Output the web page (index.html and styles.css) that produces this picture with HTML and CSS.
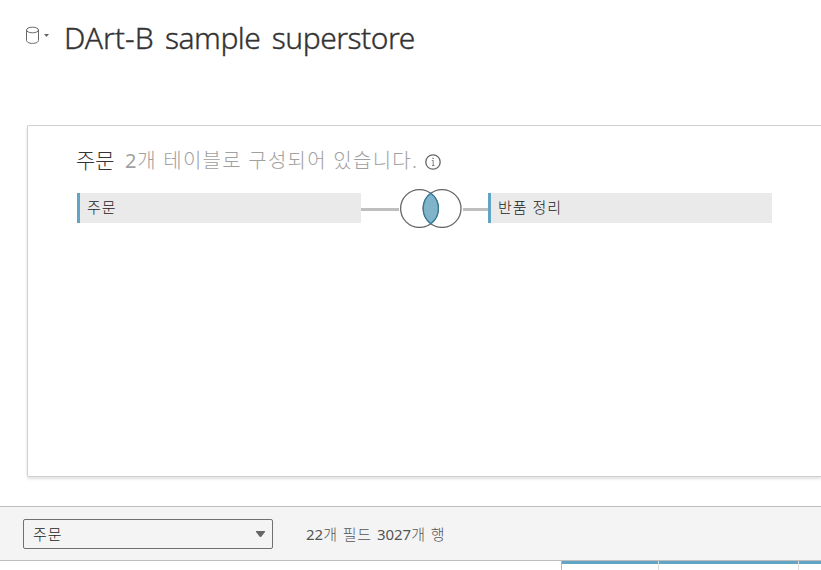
FILE: index.html
```html
<!DOCTYPE html>
<html lang="ko">
<head>
<meta charset="utf-8">
<title>DArt-B sample superstore</title>
<link rel="stylesheet" href="styles.css">
</head>
<body>
<header class="header">
  <svg class="source-icon" width="24" height="20" viewBox="0 0 24 20" fill="none" stroke="#666">
    <ellipse cx="7.5" cy="4" rx="6" ry="2.8"/>
    <path d="M1.5 4v10.2c0 1.800 2.400 3.200 6 3.200s6-1.400 6-3.200V4"/>
    <path d="M19 8h5l-2.500 3z" fill="#666" stroke="none"/>
  </svg>
  <h1 class="title"><span class="prefix">DArt-B</span> sample superstore</h1>
</header>
<main class="canvas">
  <div class="caption">
    <span class="table-name">주문</span>
    <span class="description"><span class="count">2</span>개 테이블로 구성되어 있습니다.</span>
    <svg class="info" width="16" height="16" viewBox="0 0 16 16" fill="none" stroke="#666">
      <circle cx="8" cy="8" r="7.200" stroke-width="1.300"/>
      <path d="M6.800 6.500h1.400v5M7 11.500h2.400" stroke-width=".8"/>
      <path d="M7.400 4.400h1.300" stroke-width="1.200"/>
    </svg>
  </div>
  <div class="join">
    <div class="table">주문</div>
    <div class="line left"></div>
    <svg class="venn" width="64" height="40" viewBox="0 0 64 40" fill="none" stroke="#666" stroke-width="1.300">
      <circle cx="20.500" cy="20.500" r="18.900"/>
      <circle cx="43.100" cy="20.500" r="18.900"/>
      <path d="M31.800 5.350a18.900 18.900 0 0 1 0 30.300a18.900 18.900 0 0 1 0-30.300z" fill="#7fb4ca" stroke="#337a99"/>
    </svg>
    <div class="line right"></div>
    <div class="table">반품 정리</div>
  </div>
</main>
<section class="toolbar">
  <div class="select"><span>주문</span>
    <svg width="9" height="6" viewBox="0 0 9 6"><path d="M0 0h9v1L5 6H4L0 1z" fill="#666"/></svg>
  </div>
  <span class="summary"><span class="count">22</span>개 필드 <span class="count">3027</span>개 행</span>
</section>
<section class="grid">
  <div class="column first"></div>
  <div class="column second"></div>
  <div class="column third"></div>
</section>
</body>
</html>
```

FILE: styles.css
```css
* { box-sizing: border-box; }
body {
  margin: 0;
  height: 570px;
  overflow: hidden;
  background: #fff;
  color: #333;
  font-family: "Noto Sans", "Noto Sans CJK KR", sans-serif;
  font-weight: 300;
  white-space: nowrap;
}
.header {
  display: flex;
  height: 125px;
  padding: 18px 0 0 25px;
}
.source-icon { margin-top: 8px; }
.title {
  margin: 0 0 0 15px;
  font-size: 30px;
  font-weight: 300;
  line-height: 40px;
  letter-spacing: -0.5px;
  word-spacing: 4px;
  -webkit-text-stroke: 0.35px #333;
}
.prefix { letter-spacing: 0; }
.canvas {
  height: 352px;
  margin-left: 27px;
  padding: 19px 0 0 49px;
  border: 1px solid #d0d0d0;
  border-right: 0;
  border-radius: 2px 0 0 2px;
  box-shadow: 0 2px 3px #0000001f;
}
.caption {
  display: flex;
  align-items: center;
  height: 32px;
  font-size: 20px;
  line-height: 32px;
}
.count { font-weight: 400; }
.table-name {
  width: 49px;
  margin: -2px 0 0 -1px;
  font-size: 21px;
}
.description {
  width: 300px;
  color: #a0a0a0;
  letter-spacing: 1.25px;
  word-spacing: 0;
}
.description .count { letter-spacing: 0.7px; }
.info { margin-top: 1px; }
.join {
  display: flex;
  align-items: center;
  height: 40px;
  margin-top: 11px;
}
.table {
  width: 284px;
  height: 30px;
  padding-left: 7px;
  border-left: 3px solid #62a4c4;
  background: #eaeaea;
  color: #222;
  font-size: 15px;
  line-height: 28px;
  letter-spacing: 1px;
}
.line { height: 3px; background: #bfbfbf; margin-top: 2px; }
.left { width: 38px; }
.right { width: 25px; }
.venn { display: block; }
.toolbar {
  display: flex;
  align-items: center;
  height: 55px;
  margin-top: 29px;
  padding-left: 23px;
  border-top: 1px solid #bdbdbd;
  border-bottom: 1px solid #bdbdbd;
  background: #f4f4f4;
  font-size: 15px;
}
.select {
  display: flex;
  align-items: center;
  justify-content: space-between;
  width: 250px;
  height: 30px;
  padding: 0 7px 0 9px;
  border: 1px solid #707070;
  border-radius: 2px;
  color: #222;
  letter-spacing: 1px;
}
.summary {
  margin-left: 33px;
  color: #555;
  letter-spacing: 0.9px;
}
.summary .count { letter-spacing: 0; }
.grid {
  display: flex;
  height: 9px;
  margin-left: 561px;
  border-left: 1px solid #b8b8b8;
}
.column {
  height: 9px;
  border-right: 1px solid #ddd;
  background: linear-gradient(#62a4c4 3px, #fff 3px);
}
.first { width: 97px; }
.second { width: 140px; }
.third { flex: 1; border-right: 0; }
```
